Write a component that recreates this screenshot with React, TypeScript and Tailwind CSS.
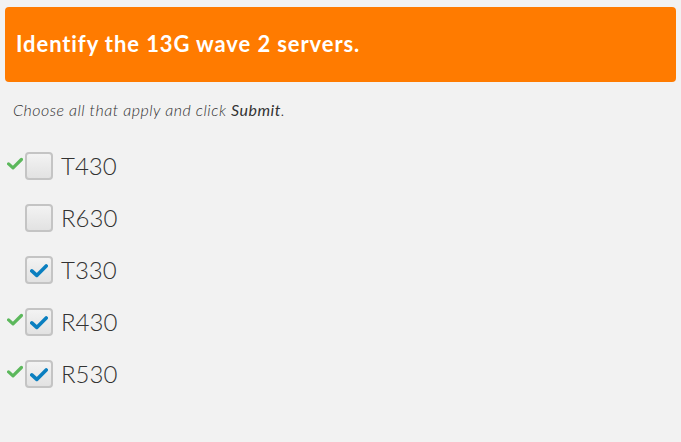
const options = [
  { label: "T430", checked: false, correct: true },
  { label: "R630", checked: false, correct: false },
  { label: "T330", checked: true, correct: false },
  { label: "R430", checked: true, correct: true },
  { label: "R530", checked: true, correct: true },
];

const Tick = ({ className }: { className: string }) => (
  <svg viewBox="0 0 20 16" className={className}>
    <path d="M2 8.5 L7.5 13.5 L18 3" fill="none" stroke="currentColor" strokeWidth="4" strokeLinecap="round" strokeLinejoin="round" />
  </svg>
);

const App = () => {
  return (
    <div className="w-[681px] h-[442px] bg-[#f2f2f2] pt-[7px] px-[5px] font-['Lato',sans-serif]">
      <div className="bg-[#ff7b00] rounded-[4px] h-[75px] flex items-center pl-[11px] pb-[2px]">
        <h1 className="text-white text-[22px] font-bold tracking-[0.9px]">
          Identify the 13G wave 2 servers.
        </h1>
      </div>
      <p className="mt-[16px] ml-[8px] text-[16px] italic font-light text-[#333] tracking-[0.5px]">
        Choose all that apply and click <b>Submit</b>.
      </p>
      <div className="mt-[30px] flex flex-col gap-[24px]">
        {options.map((o) => (
          <div key={o.label} className="flex items-center h-[28px]">
            <div className="w-[20px] flex justify-center">
              {o.correct && <Tick className="w-[16px] h-[13px] text-[#5cb85c] -mt-[6px]" />}
            </div>
            <div className="w-[28px] h-[28px] rounded-[4px] border-2 border-[#c4c4c4] bg-gradient-to-b from-[#f3f3f3] to-[#e2e2e2] flex items-center justify-center">
              {o.checked && <Tick className="w-[18px] h-[15px] text-[#0a7fc0]" />}
            </div>
            <span className="ml-[8px] text-[24px] font-light text-[#333]">{o.label}</span>
          </div>
        ))}
      </div>
    </div>
  );
};
export default App;
